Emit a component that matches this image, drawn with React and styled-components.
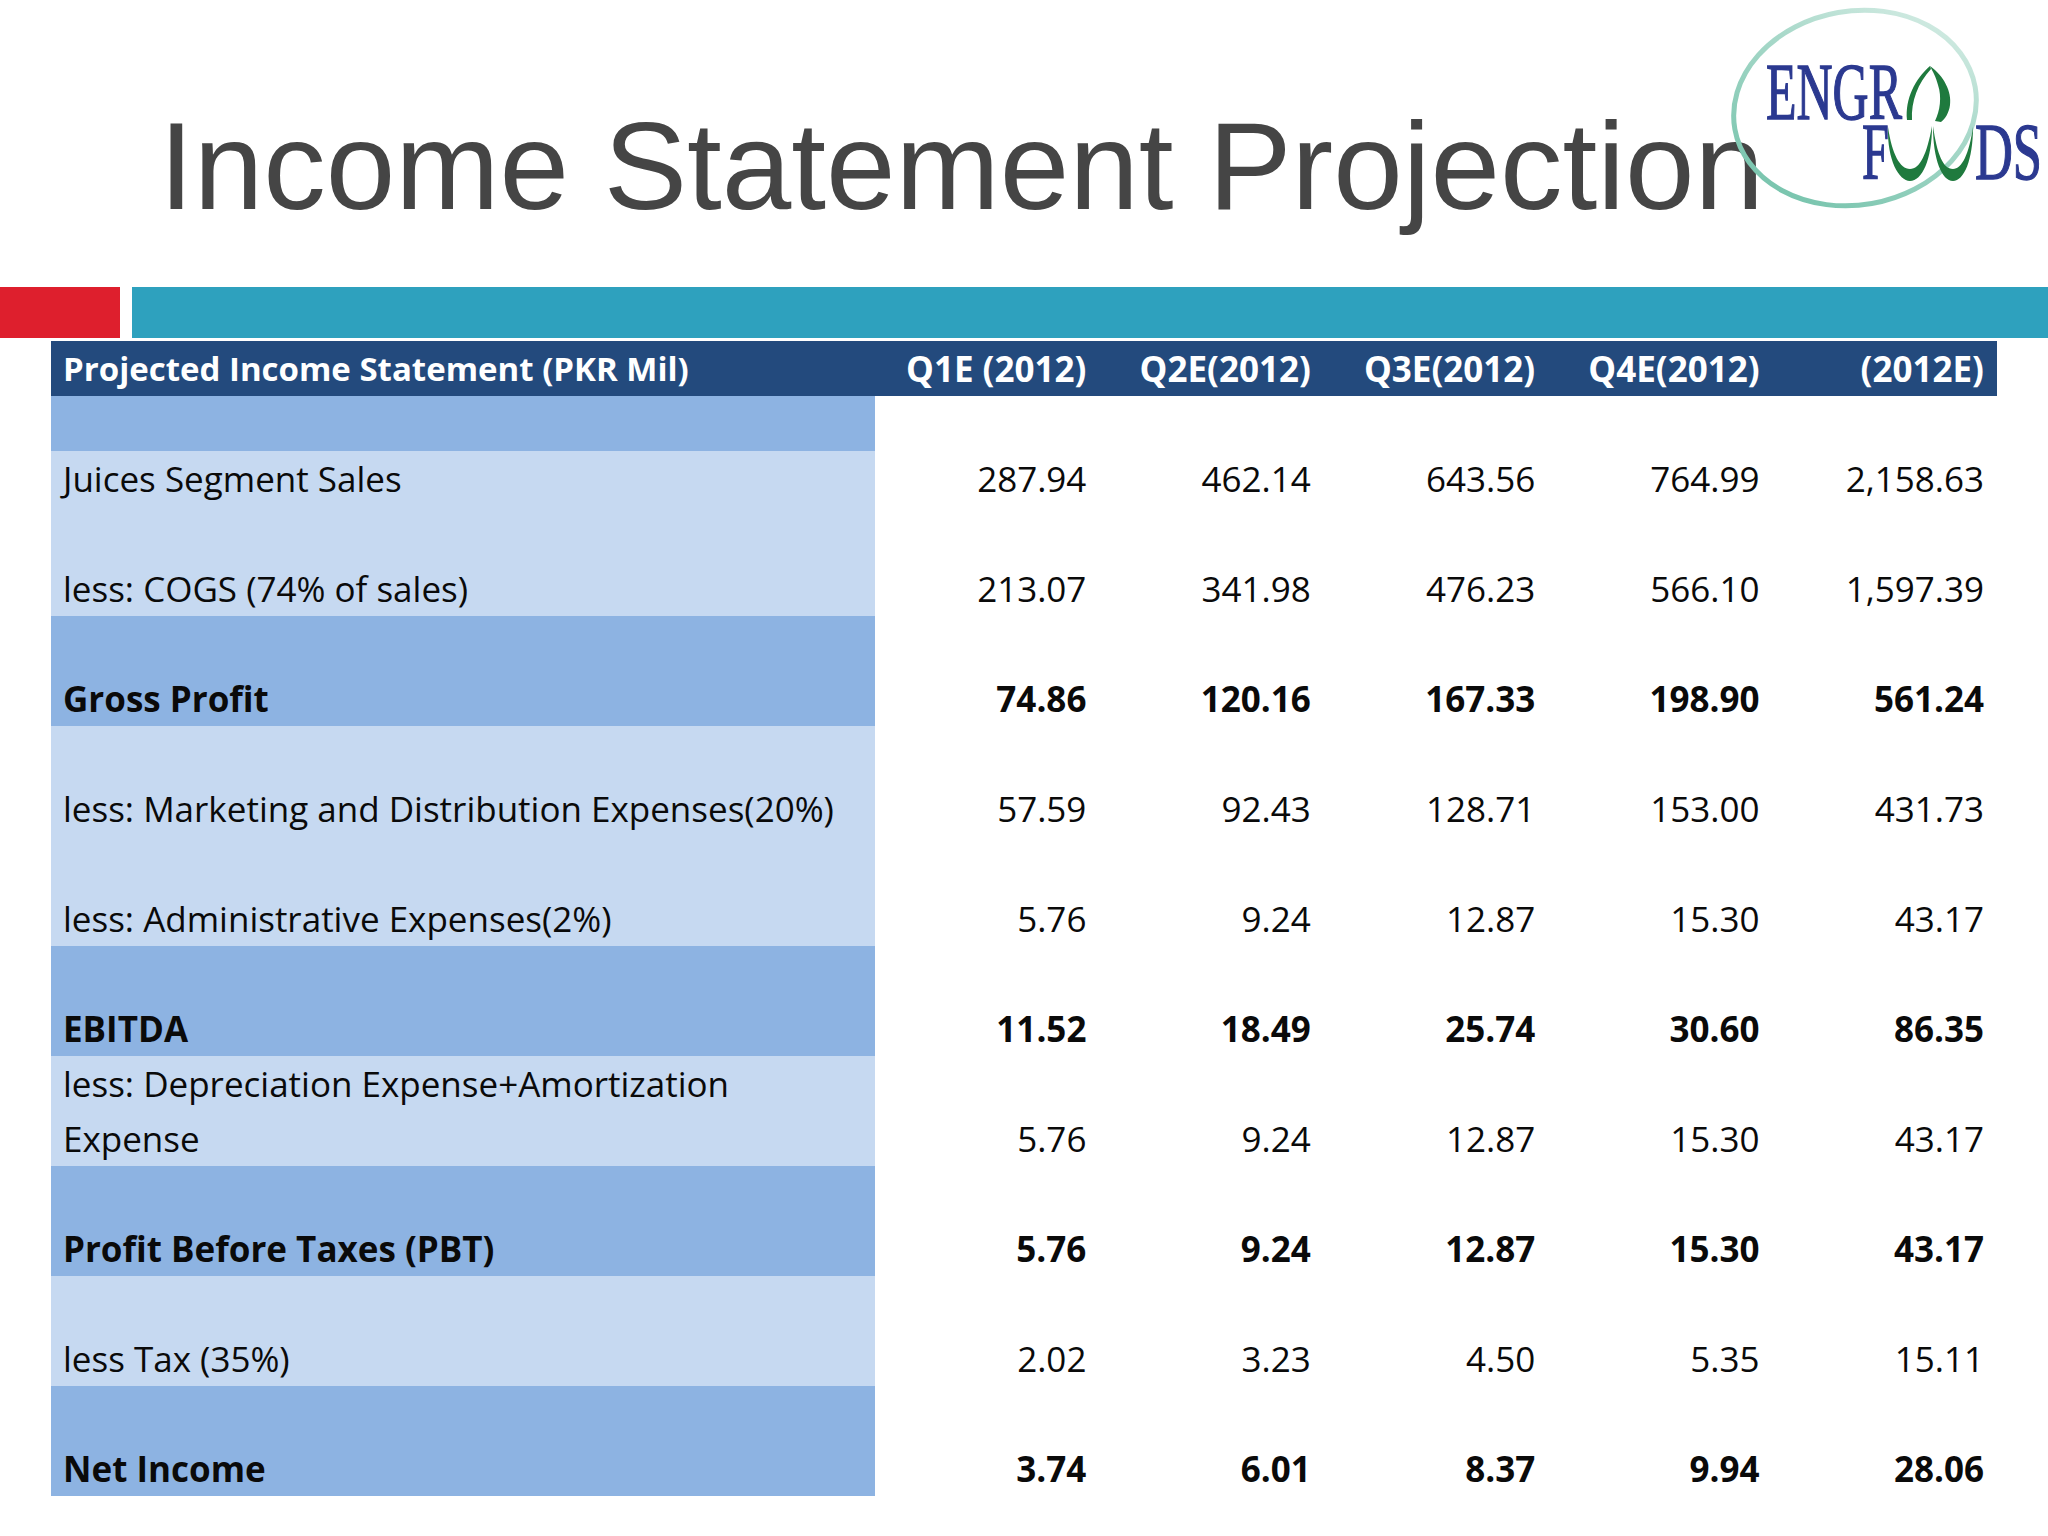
import React from "react";
import styled, { createGlobalStyle } from "styled-components";

const GlobalStyle = createGlobalStyle`
  body {
    margin: 0;
    background: #ffffff;
  }
`;

const Slide = styled.div`
  position: relative;
  width: 2048px;
  height: 1536px;
  overflow: hidden;
  background: #ffffff;
`;

const Header = styled.header`
  box-sizing: border-box;
  height: 287px;
  padding: 103px 0 0 159px;
`;

const Title = styled.h1`
  margin: 0;
  font-family: "Liberation Sans", Arial, sans-serif;
  font-weight: 400;
  font-size: 125px;
  line-height: 125px;
  color: #454545;
  white-space: nowrap;
`;

const LogoWrap = styled.div`
  position: absolute;
  top: 0;
  left: 1720px;
  width: 328px;
  height: 220px;
`;

const Bars = styled.div`
  display: flex;
  gap: 12px;
  height: 51px;
`;

const Bar = styled.div`
  background: ${(p) => p.$color};
  width: ${(p) => (p.$w ? `${p.$w}px` : "auto")};
  flex: ${(p) => (p.$w ? "none" : 1)};
`;

const Table = styled.div`
  width: 1946px;
  margin: 3px 0 0 51px;
  font-family: "Open Sans", "Noto Sans", sans-serif;
  font-size: 35px;
  line-height: 55px;
  color: #0a0a0a;
`;

const Row = styled.div`
  display: grid;
  grid-template-columns: 824px repeat(5, 1fr);
  height: ${(p) => p.$h}px;
  font-weight: ${(p) => (p.$bold ? 700 : 400)};
`;

const HeadRow = styled(Row)`
  background: #234a7d;
  color: #ffffff;
  font-weight: 700;
`;

const Label = styled.div`
  display: flex;
  align-items: flex-end;
  padding-left: 12px;
  background: ${(p) => (p.$tone === "dark" ? "#8db3e2" : p.$tone === "light" ? "#c6d9f1" : "transparent")};
  white-space: nowrap;
`;

const HeadLabel = styled(Label)`
  font-size: 33px;
`;

const Num = styled.div`
  display: flex;
  align-items: flex-end;
  justify-content: flex-end;
  padding-right: 13px;
  white-space: nowrap;
`;

const BLUE = "#2b3990";
const GREEN = "#1f7a3e";

const LogoText = ({ x, w, y, children }) => (
  <text
    x={x}
    y={y}
    fontFamily="Liberation Serif, serif"
    fontSize="80"
    fill={BLUE}
    stroke={BLUE}
    strokeWidth="1.4"
    textLength={w}
    lengthAdjust="spacingAndGlyphs"
  >
    {children}
  </text>
);

const Logo = () => (
  <svg width="328" height="220" viewBox="0 0 328 220">
    <defs>
      <linearGradient id="ring" x1="0" y1="1" x2="1" y2="0">
        <stop offset="0" stopColor="#6cbfa6" />
        <stop offset="0.6" stopColor="#a9d9ca" />
        <stop offset="1" stopColor="#e0f1eb" />
      </linearGradient>
    </defs>
    <ellipse
      cx="135"
      cy="108"
      rx="122"
      ry="97"
      transform="rotate(-10 135 108)"
      fill="none"
      stroke="url(#ring)"
      strokeWidth="5"
    />
    <LogoText x={46} y={119} w={136}>
      ENGR
    </LogoText>
    {/* leaf "O" of ENGRO */}
    <path
      fill={GREEN}
      d="M210 66 C195 79 185 99 187 120 L192 120 C191 101 198 83 211 69 Z"
    />
    <path
      fill={GREEN}
      d="M210 66 C224 76 232 92 230 105 C229 113 225 119 221 122 L215 121 C220 111 222 97 218 85 C216 77 213 72 210 66 Z"
    />
    <LogoText x={142} y={179} w={27}>
      F
    </LogoText>
    {/* cup-shaped "OO" of FOODS */}
    <path
      fill={GREEN}
      d="M168 127 C167 160 179 181 190 181 C202 181 212 160 212 126 C207 154 200 169 190 169 C180 169 172 154 168 127 Z"
    />
    <path
      fill={GREEN}
      d="M213 126 C213 160 222 181 233 181 C244 181 253 160 253 127 C249 154 242 169 233 169 C223 169 217 154 213 126 Z"
    />
    <LogoText x={255} y={179} w={67}>
      DS
    </LogoText>
  </svg>
);

const columns = ["Q1E (2012)", "Q2E(2012)", "Q3E(2012)", "Q4E(2012)", "(2012E)"];

const rows = [
  { label: "", tone: "dark", h: 55, vals: [] },
  { label: "Juices Segment Sales", tone: "light", h: 55, vals: ["287.94", "462.14", "643.56", "764.99", "2,158.63"] },
  { label: "less: COGS (74% of sales)", tone: "light", h: 110, vals: ["213.07", "341.98", "476.23", "566.10", "1,597.39"] },
  { label: "Gross Profit", tone: "dark", h: 110, bold: true, vals: ["74.86", "120.16", "167.33", "198.90", "561.24"] },
  { label: "less: Marketing and Distribution Expenses(20%)", tone: "light", h: 110, vals: ["57.59", "92.43", "128.71", "153.00", "431.73"] },
  { label: "less: Administrative Expenses(2%)", tone: "light", h: 110, vals: ["5.76", "9.24", "12.87", "15.30", "43.17"] },
  { label: "EBITDA", tone: "dark", h: 110, bold: true, vals: ["11.52", "18.49", "25.74", "30.60", "86.35"] },
  {
    label: (
      <span>
        less: Depreciation Expense+Amortization
        <br />
        Expense
      </span>
    ),
    tone: "light",
    h: 110,
    vals: ["5.76", "9.24", "12.87", "15.30", "43.17"],
  },
  { label: "Profit Before Taxes (PBT)", tone: "dark", h: 110, bold: true, vals: ["5.76", "9.24", "12.87", "15.30", "43.17"] },
  { label: "less Tax (35%)", tone: "light", h: 110, vals: ["2.02", "3.23", "4.50", "5.35", "15.11"] },
  { label: "Net Income", tone: "dark", h: 110, bold: true, vals: ["3.74", "6.01", "8.37", "9.94", "28.06"] },
];

const App = () => {
  return (
    <Slide>
      <GlobalStyle />
      <Header>
        <Title>Income Statement Projection</Title>
      </Header>
      <LogoWrap>
        <Logo />
      </LogoWrap>
      <Bars>
        <Bar $color="#de1f2d" $w={120} />
        <Bar $color="#2ea1be" />
      </Bars>
      <Table>
        <HeadRow $h={55}>
          <HeadLabel>Projected Income Statement (PKR Mil)</HeadLabel>
          {columns.map((c) => (
            <Num key={c}>{c}</Num>
          ))}
        </HeadRow>
        {rows.map((r, i) => (
          <Row key={i} $h={r.h} $bold={r.bold}>
            <Label $tone={r.tone}>{r.label}</Label>
            {r.vals.map((v, j) => (
              <Num key={j}>{v}</Num>
            ))}
          </Row>
        ))}
      </Table>
    </Slide>
  );
};

export default App;
